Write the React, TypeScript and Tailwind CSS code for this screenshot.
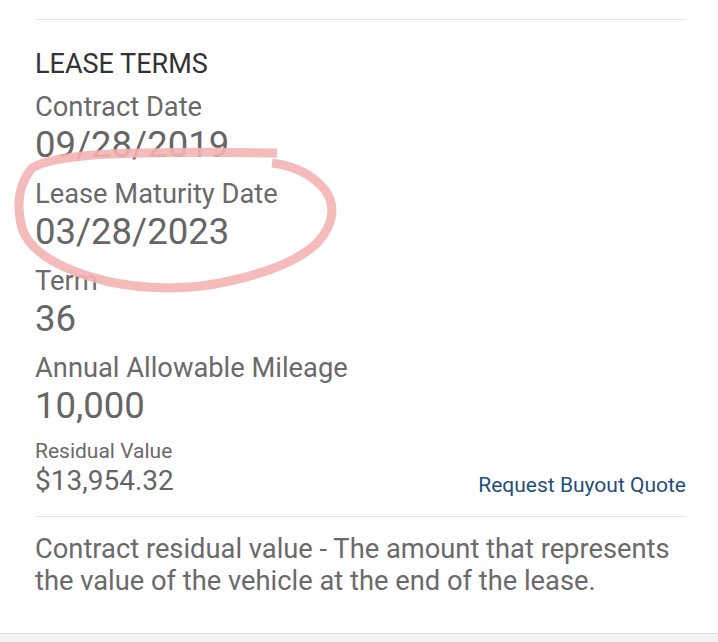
import React from "react";

const font = { fontFamily: "Roboto, 'Liberation Sans', sans-serif" };

function Field({ label, value }: { label: string; value: string }) {
  return (
    <div className="mb-[12px]">
      <div className="text-[27.3px] leading-[33px] text-[#6a6a6a]">{label}</div>
      <div className="text-[36.5px] leading-[42px] text-[#666666]">{value}</div>
    </div>
  );
}

export default function App() {
  return (
    <div className="relative w-[718px] h-[642px] bg-white overflow-hidden flex flex-col" style={font}>
      <div className="flex-1 pl-[35px] pr-[32px] pt-[19px]">
        <div className="border-t border-[#e6e6e6]" />
        <div className="mt-[24px] mb-[7px] text-[27px] leading-[40px] text-[#333333]">LEASE TERMS</div>
        <Field label="Contract Date" value="09/28/2019" />
        <Field label="Lease Maturity Date" value="03/28/2023" />
        <Field label="Term" value="36" />
        <Field label="Annual Allowable Mileage" value="10,000" />
        <div className="flex items-end justify-between">
          <div>
            <div className="text-[21px] leading-[24px] text-[#6a6a6a]">Residual Value</div>
            <div className="text-[28px] leading-[36px] text-[#666666]">$13,954.32</div>
          </div>
          <div className="text-[21px] leading-[24px] text-[#1f4f7c] mb-[2px]">Request Buyout Quote</div>
        </div>
        <div className="mt-[17px] border-t border-[#e6e6e6]" />
        <div className="mt-[16px] text-[27.3px] leading-[32px] text-[#6a6a6a]">
          Contract residual value - The amount that represents the value of the vehicle at the end of the lease.
        </div>
      </div>
      <div className="h-[9px] bg-[#f2f2f2] border-t border-[#dcdcdc]" />
      <svg className="absolute left-0 top-0 pointer-events-none" width="718" height="642" viewBox="0 0 718 642">
        <path
          d="M277 153 C 220 152, 160 152, 110 154 C 70 156, 45 160, 32 168 C 18 185, 16 205, 22 228 C 30 252, 60 270, 110 282 C 150 290, 190 290, 230 281 C 270 272, 300 260, 318 242 C 334 224, 336 205, 325 190 C 313 175, 295 166, 272 163"
          fill="none"
          stroke="#f4b2b3"
          strokeWidth="9"
          strokeLinecap="butt"
          strokeLinejoin="round"
          opacity="0.9"
        />
      </svg>
    </div>
  );
}
